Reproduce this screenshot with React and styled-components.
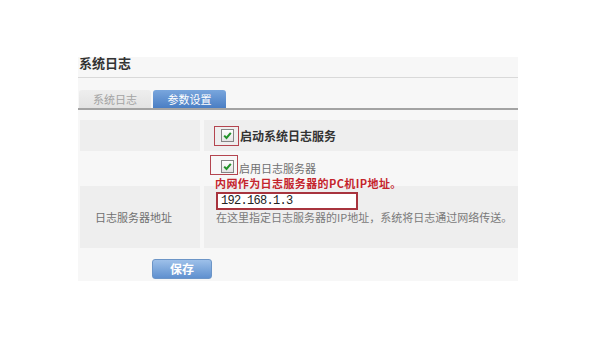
import styled, { createGlobalStyle } from "styled-components";

const GlobalStyle = createGlobalStyle`
  body {
    margin: 0;
    background: #ffffff;
    font-family: "Noto Sans CJK SC", "Liberation Sans", sans-serif;
  }
`;

const Page = styled.div`
  padding: 57px 0 0 78px;
  width: 600px;
  height: 340px;
  box-sizing: border-box;
`;

const Panel = styled.section`
  width: 440px;
  background: #f7f7f7;
  padding: 0 0 2px 1px;
  box-sizing: border-box;
`;

const Title = styled.h2`
  margin: 0;
  height: 20px;
  line-height: 12px;
  font-size: 13px;
  font-weight: bold;
  color: #333;
  border-bottom: 1px solid #d9d9d9;
  margin-left: -1px;
  padding-left: 1px;
`;

const TabBar = styled.div`
  display: flex;
  gap: 2px;
  margin: 12px 0 0 -1px;
  padding-left: 1px;
  border-bottom: 2px solid #a3a3a3;
`;

const Tab = styled.div`
  width: ${(p) => p.$w}px;
  height: 18px;
  line-height: 18px;
  font-size: 11px;
  text-align: center;
  border-radius: 3px 3px 0 0;
  color: ${(p) => (p.$active ? "#ffffff" : "#a3a3a3")};
  background: ${(p) =>
    p.$active
      ? "linear-gradient(#79a6dd, #4a7ec4)"
      : "linear-gradient(#eeeeee, #e3e3e3)"};
`;

const Table = styled.div`
  margin: 10px 0 0 1px;
  display: flex;
  flex-direction: column;
  gap: 1px;
`;

const Row = styled.div`
  display: flex;
  gap: 4px;
  height: ${(p) => p.$h}px;
`;

const Label = styled.div`
  width: 120px;
  flex-shrink: 0;
  background: ${(p) => (p.$plain ? "transparent" : "#eeeeee")};
  display: flex;
  align-items: center;
  padding-left: 15px;
  box-sizing: border-box;
  font-size: 11px;
  color: #707070;
`;

const Field = styled.div`
  flex: 1;
  background: ${(p) => (p.$plain ? "transparent" : "#eeeeee")};
  display: flex;
  flex-direction: column;
  justify-content: ${(p) => p.$justify || "flex-start"};
  padding: ${(p) => p.$pad || "0"};
`;

const Line = styled.div`
  display: flex;
  align-items: ${(p) => p.$align || "center"};
`;

const Mark = styled.span`
  display: inline-flex;
  align-items: flex-end;
  justify-content: flex-end;
  box-sizing: border-box;
  width: ${(p) => p.$w}px;
  height: ${(p) => p.$h}px;
  padding: ${(p) => p.$pad};
  border: 1.5px solid #b4454f;
`;

const Box = styled.span`
  display: inline-flex;
  align-items: center;
  justify-content: center;
  width: 13px;
  height: 13px;
  box-sizing: border-box;
  border: 1px solid #858585;
  background: linear-gradient(#ffffff, #e4e4e4);
`;

const OptionText = styled.span`
  font-size: ${(p) => (p.$strong ? 12 : 11)}px;
  font-weight: ${(p) => (p.$strong ? "bold" : "normal")};
  color: ${(p) => (p.$strong ? "#333" : "#707070")};
  line-height: 14px;
  margin-left: 1px;
`;

const Note = styled.div`
  position: relative;
  z-index: 1;
  font-size: 11px;
  font-weight: bold;
  color: #c4242c;
  line-height: 12px;
  letter-spacing: 0.4px;
  margin: 2px 0 0 5px;
  white-space: nowrap;
`;

const AddrInput = styled.input`
  width: 142px;
  height: 18px;
  box-sizing: border-box;
  border: 2px solid #a8343e;
  background: #ffffff;
  font-family: "Liberation Mono", monospace;
  font-size: 12px;
  letter-spacing: -0.7px;
  color: #222;
  padding: 0 0 0 3px;
  outline: none;
`;

const Hint = styled.div`
  font-size: 11px;
  color: #7a7a7a;
  line-height: 13px;
  margin-top: 1px;
  white-space: nowrap;
`;

const SaveButton = styled.button`
  margin: 11px 0 0 73px;
  width: 60px;
  height: 20px;
  border: 1px solid #6c95c7;
  border-radius: 3px;
  background: linear-gradient(#9dc0e9, #5f90cf);
  color: #fff;
  font-family: "Noto Sans CJK SC", sans-serif;
  font-size: 12px;
  font-weight: bold;
  line-height: 16px;
  padding: 0;
`;

const Check = () => (
  <Box>
    <svg width="9" height="9" viewBox="0 0 9 9">
      <path d="M1.2 4.6 L3.5 7 L7.8 1.8" fill="none" stroke="#23932a" strokeWidth="2" />
    </svg>
  </Box>
);

const App = () => {
  return (
    <Page>
      <GlobalStyle />
      <Panel>
        <Title>系统日志</Title>
        <TabBar>
          <Tab $w={72}>系统日志</Tab>
          <Tab $w={73} $active>
            参数设置
          </Tab>
        </TabBar>
        <Table>
          <Row $h={31}>
            <Label />
            <Field $justify="center" $pad="0 0 0 10px">
              <Line>
                <Mark $w={25} $h={20} $pad="0 4px 3px 0">
                  <Check />
                </Mark>
                <OptionText $strong>启动系统日志服务</OptionText>
              </Line>
            </Field>
          </Row>
          <Row $h={33}>
            <Label $plain />
            <Field $plain $pad="3px 0 0 6px">
              <Line $align="flex-end">
                <Mark $w={28} $h={20} $pad="0 3px 1px 0">
                  <Check />
                </Mark>
                <OptionText>启用日志服务器</OptionText>
              </Line>
              <Note>内网作为日志服务器的PC机IP地址。</Note>
            </Field>
          </Row>
          <Row $h={62}>
            <Label>日志服务器地址</Label>
            <Field $pad="6px 0 0 12px">
              <AddrInput defaultValue="192.168.1.3" />
              <Hint>在这里指定日志服务器的IP地址，系统将日志通过网络传送。</Hint>
            </Field>
          </Row>
        </Table>
        <SaveButton>保存</SaveButton>
      </Panel>
    </Page>
  );
};

export default App;
